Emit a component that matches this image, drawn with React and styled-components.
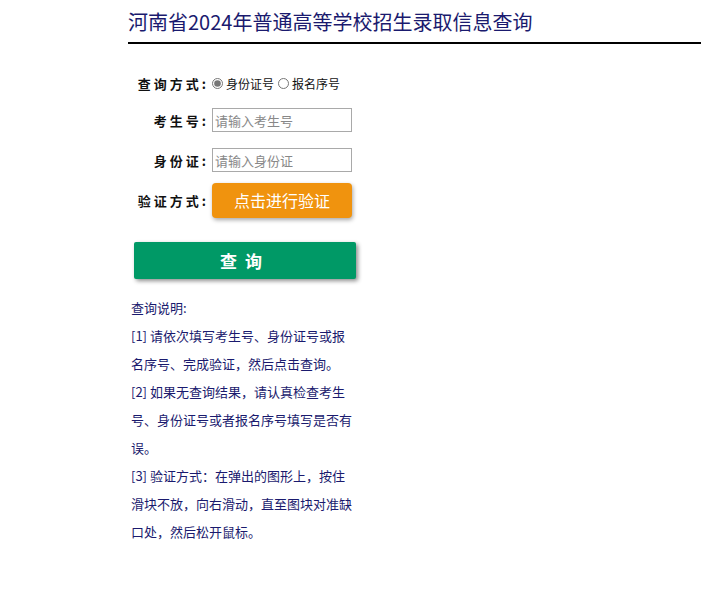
import React from "react";
import styled, { createGlobalStyle } from "styled-components";

const G = createGlobalStyle`
  body{margin:0;background:#fff;font-family:"Noto Sans CJK SC","Liberation Sans",sans-serif;}
`;
const Page = styled.div`padding-left:128px;`;
const Title = styled.h1`
  margin:0;padding-top:8px;height:34px;font-size:20px;font-weight:normal;color:#1a1a6e;
  border-bottom:2px solid #000;line-height:28px;
`;
const Form = styled.div`padding:22px 0 0 3px;width:230px;`;
const Row = styled.div`display:flex;align-items:center;height:${p=>p.h||40}px;`;
const Label = styled.span`
  width:78px;text-align:right;font-weight:bold;font-size:13px;letter-spacing:${p=>p.ls||1}px;
  padding-right:3px;color:#111;white-space:nowrap;
`;
const Radio = styled.label`display:flex;align-items:center;font-size:12px;margin-right:4px;color:#111;
  input{margin:0 3px 0 0;width:11px;height:11px;accent-color:#777;}`;
const Input = styled.input`
  width:140px;height:24px;box-sizing:border-box;border:1px solid #a9a9a9;font-size:13px;padding:0 2px;
  font-family:inherit;&::placeholder{color:#888;}
`;
const Verify = styled.button`
  width:140px;height:35px;border:none;border-radius:4px;background:#f0930e;color:#fff;
  font-size:16px;font-family:inherit;box-shadow:1px 2px 4px rgba(0,0,0,.35);
`;
const Submit = styled.button`
  margin:22px 0 0 6px;width:222px;height:37px;border:none;border-radius:2px;background:#009966;
  color:#fff;font-weight:bold;font-size:17px;letter-spacing:8px;font-family:inherit;
  box-shadow:2px 2px 4px rgba(0,0,0,.45);
`;
const Notes = styled.div`
  margin:15px 0 0 3px;width:222px;font-size:13px;line-height:28px;color:#1a1a6e;
  p{margin:0;}
`;

export default function App(){
  return <Page><G/>
    <Title>河南省2024年普通高等学校招生录取信息查询</Title>
    <Form>
      <Row h={34}><Label ls={3}>查询方式:</Label>
        <Radio><input type="radio" name="t" defaultChecked/>身份证号</Radio>
        <Radio><input type="radio" name="t"/>报名序号</Radio></Row>
      <Row><Label ls={3}>考生号:</Label><Input placeholder="请输入考生号"/></Row>
      <Row><Label ls={3}>身份证:</Label><Input placeholder="请输入身份证"/></Row>
      <Row h={40}><Label ls={3}>验证方式:</Label><Verify>点击进行验证</Verify></Row>
    </Form>
    <Submit>查询</Submit>
    <Notes>
      <p>查询说明:</p>
      <p>[1] 请依次填写考生号、身份证号或报名序号、完成验证，然后点击查询。</p>
      <p>[2] 如果无查询结果，请认真检查考生号、身份证号或者报名序号填写是否有误。</p>
      <p>[3] 验证方式：在弹出的图形上，按住滑块不放，向右滑动，直至图块对准缺口处，然后松开鼠标。</p>
    </Notes>
  </Page>;
}
